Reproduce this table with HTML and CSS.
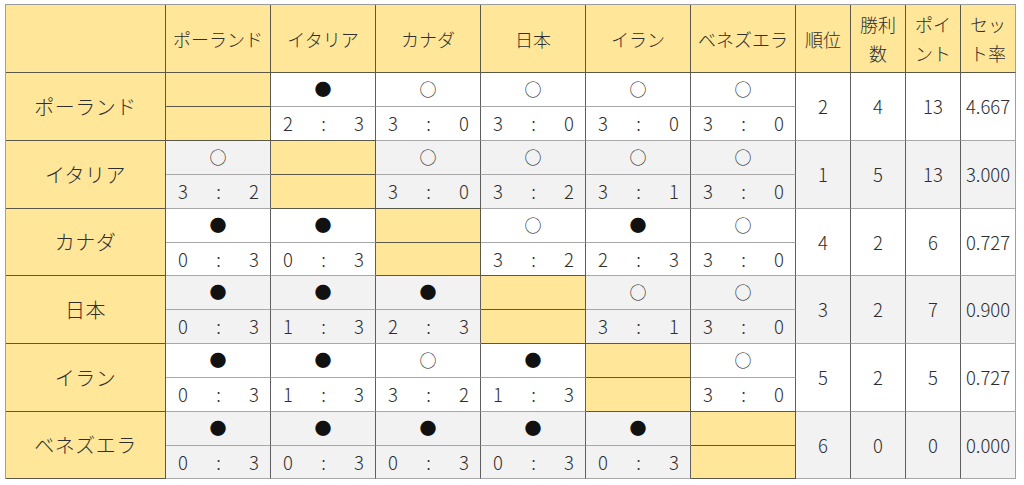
FILE: index.html
```html
<!DOCTYPE html>
<html lang="ja">
<head>
<meta charset="utf-8">
<title>星取表</title>
<link rel="stylesheet" href="styles.css">
</head>
<body>
<div class="table">
  <div class="c hd"></div>
  <div class="c hd">ポーランド</div>
  <div class="c hd">イタリア</div>
  <div class="c hd">カナダ</div>
  <div class="c hd">日本</div>
  <div class="c hd">イラン</div>
  <div class="c hd">ベネズエラ</div>
  <div class="c hd">順位</div>
  <div class="c hd two">勝利<br>数</div>
  <div class="c hd two">ポイ<br>ント</div>
  <div class="c hd two last">セッ<br>ト率</div>

  <!-- ポーランド -->
  <div class="c rh">ポーランド</div>
  <div class="c dg top"></div>
  <div class="c w mk">●</div>
  <div class="c w mk">○</div>
  <div class="c w mk">○</div>
  <div class="c w mk">○</div>
  <div class="c w mk">○</div>
  <div class="c w st">2</div>
  <div class="c w st">4</div>
  <div class="c w st">13</div>
  <div class="c w st last">4.667</div>
  <div class="c dg"></div>
  <div class="c w sc"><span>2</span><span>:</span><span>3</span></div>
  <div class="c w sc"><span>3</span><span>:</span><span>0</span></div>
  <div class="c w sc"><span>3</span><span>:</span><span>0</span></div>
  <div class="c w sc"><span>3</span><span>:</span><span>0</span></div>
  <div class="c w sc"><span>3</span><span>:</span><span>0</span></div>

  <!-- イタリア -->
  <div class="c rh">イタリア</div>
  <div class="c g mk">○</div>
  <div class="c dg top"></div>
  <div class="c g mk">○</div>
  <div class="c g mk">○</div>
  <div class="c g mk">○</div>
  <div class="c g mk">○</div>
  <div class="c g st">1</div>
  <div class="c g st">5</div>
  <div class="c g st">13</div>
  <div class="c g st last">3.000</div>
  <div class="c g sc"><span>3</span><span>:</span><span>2</span></div>
  <div class="c dg"></div>
  <div class="c g sc"><span>3</span><span>:</span><span>0</span></div>
  <div class="c g sc"><span>3</span><span>:</span><span>2</span></div>
  <div class="c g sc"><span>3</span><span>:</span><span>1</span></div>
  <div class="c g sc"><span>3</span><span>:</span><span>0</span></div>

  <!-- カナダ -->
  <div class="c rh">カナダ</div>
  <div class="c w mk">●</div>
  <div class="c w mk">●</div>
  <div class="c dg top"></div>
  <div class="c w mk">○</div>
  <div class="c w mk">●</div>
  <div class="c w mk">○</div>
  <div class="c w st">4</div>
  <div class="c w st">2</div>
  <div class="c w st">6</div>
  <div class="c w st last">0.727</div>
  <div class="c w sc"><span>0</span><span>:</span><span>3</span></div>
  <div class="c w sc"><span>0</span><span>:</span><span>3</span></div>
  <div class="c dg"></div>
  <div class="c w sc"><span>3</span><span>:</span><span>2</span></div>
  <div class="c w sc"><span>2</span><span>:</span><span>3</span></div>
  <div class="c w sc"><span>3</span><span>:</span><span>0</span></div>

  <!-- 日本 -->
  <div class="c rh">日本</div>
  <div class="c g mk">●</div>
  <div class="c g mk">●</div>
  <div class="c g mk">●</div>
  <div class="c dg top"></div>
  <div class="c g mk">○</div>
  <div class="c g mk">○</div>
  <div class="c g st">3</div>
  <div class="c g st">2</div>
  <div class="c g st">7</div>
  <div class="c g st last">0.900</div>
  <div class="c g sc"><span>0</span><span>:</span><span>3</span></div>
  <div class="c g sc"><span>1</span><span>:</span><span>3</span></div>
  <div class="c g sc"><span>2</span><span>:</span><span>3</span></div>
  <div class="c dg"></div>
  <div class="c g sc"><span>3</span><span>:</span><span>1</span></div>
  <div class="c g sc"><span>3</span><span>:</span><span>0</span></div>

  <!-- イラン -->
  <div class="c rh">イラン</div>
  <div class="c w mk">●</div>
  <div class="c w mk">●</div>
  <div class="c w mk">○</div>
  <div class="c w mk">●</div>
  <div class="c dg top"></div>
  <div class="c w mk">○</div>
  <div class="c w st">5</div>
  <div class="c w st">2</div>
  <div class="c w st">5</div>
  <div class="c w st last">0.727</div>
  <div class="c w sc"><span>0</span><span>:</span><span>3</span></div>
  <div class="c w sc"><span>1</span><span>:</span><span>3</span></div>
  <div class="c w sc"><span>3</span><span>:</span><span>2</span></div>
  <div class="c w sc"><span>1</span><span>:</span><span>3</span></div>
  <div class="c dg"></div>
  <div class="c w sc"><span>3</span><span>:</span><span>0</span></div>

  <!-- ベネズエラ -->
  <div class="c rh">ベネズエラ</div>
  <div class="c g mk">●</div>
  <div class="c g mk">●</div>
  <div class="c g mk">●</div>
  <div class="c g mk">●</div>
  <div class="c g mk">●</div>
  <div class="c dg top"></div>
  <div class="c g st">6</div>
  <div class="c g st">0</div>
  <div class="c g st">0</div>
  <div class="c g st last">0.000</div>
  <div class="c g sc"><span>0</span><span>:</span><span>3</span></div>
  <div class="c g sc"><span>0</span><span>:</span><span>3</span></div>
  <div class="c g sc"><span>0</span><span>:</span><span>3</span></div>
  <div class="c g sc"><span>0</span><span>:</span><span>3</span></div>
  <div class="c g sc"><span>0</span><span>:</span><span>3</span></div>
  <div class="c dg"></div>
</div>
</body>
</html>
```

FILE: styles.css
```css
html, body {
  margin: 0;
  padding: 0;
  background: #ffffff;
}

body {
  padding: 4px 0 0 5px;
  font-family: "Noto Sans CJK JP", "Noto Sans", sans-serif;
  font-weight: 300;
  color: #2e2e2e;
}

.table {
  display: grid;
  width: max-content;
  grid-template-columns: 160px repeat(6, 105px) 55px 55px 55px 55px;
  grid-template-rows: 68px 34px 34px 34px 34px 34px 33px 34px 34px 34px 34px 34px 33px;
  border-top: 1px solid #9a9a9a;
  border-left: 1px solid #a0a0a0;
}

.c {
  box-sizing: border-box;
  display: flex;
  align-items: center;
  justify-content: center;
  border-right: 1px solid #5e5e5e;
  border-bottom: 1px solid #a8a8a8;
  font-size: 18px;
  line-height: 1;
  text-align: center;
}

.hd {
  background: #ffe699;
  border-right-color: #5a5848;
  border-bottom-color: #5a5848;
  font-size: 18px;
}

.hd.two {
  line-height: 29px;
  padding-top: 1px;
}

.rh {
  grid-column: 1;
  grid-row: span 2;
  background: #ffe699;
  border-right-color: #5a5848;
  border-bottom-color: #5a5848;
  font-size: 20px;
  letter-spacing: 0.5px;
}

.dg {
  background: #ffe699;
  border-right-color: #5a5848;
  border-bottom-color: #5a5848;
}

.dg.top {
  box-shadow: 0 -1px 0 #5a5848;
}

.w {
  background: #ffffff;
}

.g {
  background: #f2f2f2;
}

.mk {
  font-size: 17px;
  color: #111111;
  padding-bottom: 3px;
}

.sc {
  justify-content: space-between;
  padding: 0 11px 0 12px;
  font-size: 18.5px;
}

.st {
  grid-row: span 2;
  font-size: 18.5px;
}

.last {
  border-right-color: #a0a0a0;
}
```
